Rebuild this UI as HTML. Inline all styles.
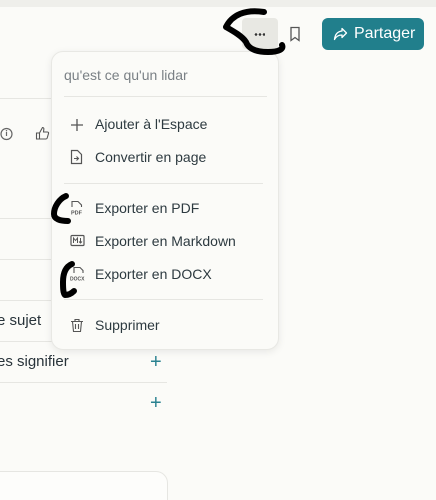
<!DOCTYPE html>
<html><head><meta charset="utf-8"><style>
html,body{margin:0;padding:0;width:436px;height:500px;overflow:hidden}
body{position:relative;background:#fbfbf8;font-family:"Liberation Sans",sans-serif;color:#28333a}
.abs{position:absolute}
.line{position:absolute;height:1px;background:#e6e6e2}
.menu{position:absolute;left:51px;top:51px;width:226px;height:297px;background:#fbfbf8;border:1px solid #e8e8e4;border-radius:12px;box-shadow:0 2px 8px rgba(0,0,0,0.08)}
.item{position:absolute;left:43px;font-size:14px;color:#2d3a40}
.ic{position:absolute;left:18px}
</style></head><body>
<div class="abs" style="left:0;top:0;width:436px;height:7px;background:#efefeb"></div>
<div class="line" style="left:0;top:98px;width:60px"></div>
<svg class="abs" style="left:0;top:126px" width="14" height="16" viewBox="0 0 14 16"><circle cx="6.5" cy="8" r="5.5" fill="none" stroke="#666" stroke-width="1.2"/><path d="M6.5 6v4" stroke="#666" stroke-width="1.2"/><circle cx="6.5" cy="4.7" r=".7" fill="#666"/></svg>
<svg class="abs" style="left:35px;top:126px" width="15" height="15" viewBox="0 0 15 15"><path d="M1.5 7h3v6h-3zM4.5 7l3-5.5c1.2 0 1.5 1 1.3 2L8.5 6h4c1 0 1.2.8 1 1.5l-1.3 4.5c-.2.6-.6 1-1.2 1H4.5" fill="none" stroke="#555" stroke-width="1.1"/></svg>
<div class="line" style="left:0;top:218px;width:60px"></div>
<div class="line" style="left:0;top:259px;width:60px"></div>
<div class="line" style="left:0;top:300px;width:60px"></div>
<div class="abs" style="left:-3px;top:312px;font-size:15px">e sujet</div>
<div class="line" style="left:0;top:341px;width:167px"></div>
<div class="abs" style="left:-3px;top:353px;font-size:15px">es signifier</div>
<div class="abs" style="left:150px;top:351px;font-size:20px;color:#2a8290">+</div>
<div class="line" style="left:0;top:382px;width:167px"></div>
<div class="abs" style="left:150px;top:392px;font-size:20px;color:#2a8290">+</div>
<div class="abs" style="left:-20px;top:471px;width:186px;height:40px;border:1px solid #e6e6e2;border-radius:12px;background:#fdfdfb"></div>
<div class="abs" style="left:242px;top:18px;width:36px;height:31px;background:#e8e8e3;border-radius:4px"></div>
<div class="abs" style="left:254px;top:33px;width:11px;height:3px;background:radial-gradient(circle,#333 1.2px,transparent 1.4px) 0 0/4px 3px"></div>
<svg class="abs" style="left:289px;top:26px" width="12" height="16" viewBox="0 0 12 16"><path d="M2 1.5h8v13l-4-3-4 3z" fill="none" stroke="#555" stroke-width="1.3"/></svg>
<div class="abs" style="left:322px;top:18px;width:102px;height:32px;background:#217f8c;border-radius:6px;color:#fff;font-size:16px;line-height:32px"><svg style="position:absolute;left:11px;top:9px" width="15" height="14" viewBox="0 0 15 14"><path d="M9 1.5l4.5 4.5L9 10.5V8C5 8 3 9.5 1.5 12.5 2 8 4 4.5 9 4z" fill="none" stroke="#fff" stroke-width="1.3" stroke-linejoin="round"/></svg><span style="position:absolute;left:32px">Partager</span></div>
<div class="menu">
<div class="abs" style="left:12px;top:15px;font-size:14px;color:#7a8085">qu'est ce qu'un lidar</div>
<div class="line" style="left:12px;top:44px;width:203px"></div>
<svg class="ic" style="top:66px" width="14" height="14"><path d="M7 1v12M1 7h12" stroke="#555" stroke-width="1.3"/></svg>
<div class="item" style="top:64px">Ajouter à l'Espace</div>
<svg class="ic" style="top:97px" width="13" height="16"><path d="M1.5 1.5h6l4 4v9h-10z" fill="none" stroke="#555" stroke-width="1.2"/><path d="M4 9.5h4M6.5 7.5l2 2-2 2" fill="none" stroke="#555" stroke-width="1.1"/></svg>
<div class="item" style="top:97px">Convertir en page</div>
<div class="line" style="left:12px;top:131px;width:199px"></div>
<svg class="ic" style="top:148px" width="14" height="16"><path d="M2 7V1.5h6l3.5 3.5v2" fill="none" stroke="#555" stroke-width="1.1"/><text x="1" y="14.5" font-size="5.5" font-family="Liberation Sans" font-weight="bold" fill="#555">PDF</text></svg>
<div class="item" style="top:148px">Exporter en PDF</div>
<svg class="ic" style="top:182px" width="15" height="13"><rect x="1" y="1.5" width="13" height="10" rx="1" fill="none" stroke="#555" stroke-width="1.2"/><path d="M3.5 9V4l2 2.5 2-2.5v5M10.5 4v5M9 7.5l1.5 1.5 1.5-1.5" fill="none" stroke="#555" stroke-width="1"/></svg>
<div class="item" style="top:181px">Exporter en Markdown</div>
<svg class="ic" style="top:214px" width="17" height="16"><path d="M4 7V1.5h6l3 3V7" fill="none" stroke="#555" stroke-width="1.1"/><text x="0" y="14.5" font-size="5" font-family="Liberation Sans" font-weight="bold" fill="#555">DOCX</text></svg>
<div class="item" style="top:214px">Exporter en DOCX</div>
<div class="line" style="left:12px;top:247px;width:199px"></div>
<svg class="ic" style="top:266px" width="14" height="15"><path d="M1 3.5h12M5 3.5V1.5h4v2M2.5 3.5l1 10h7l1-10M5.5 6v5M8.5 6v5" fill="none" stroke="#555" stroke-width="1.1"/></svg>
<div class="item" style="top:265px">Supprimer</div>
</div>
<svg class="abs" style="left:0;top:0" width="436" height="500">
<g fill="none" stroke="#000" stroke-width="6" stroke-linecap="round" stroke-linejoin="round">
<path d="M264 12C245 9 232 15 226 27c7 4 16 9 20 15 3 8 12 10 22 10 11 0 16-3 14-7"/>
<path d="M66 196c-7 3-12 11-12 18 0 5 6 7 14 7"/>
<path d="M72 264c-7 3-9 10-9 18 0 5 0 11 2 13 4 0 7-2 9-4"/>
</g></svg>
</body></html>
